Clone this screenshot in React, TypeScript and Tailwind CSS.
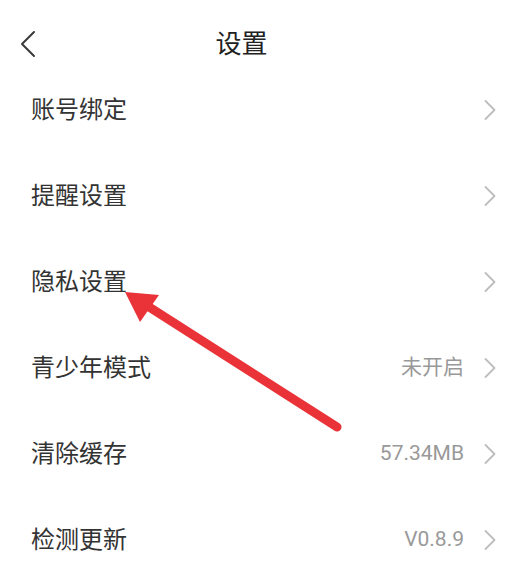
interface SettingRow {
  label: string;
  value?: string;
}

const rows: SettingRow[] = [
  { label: "账号绑定" },
  { label: "提醒设置" },
  { label: "隐私设置" },
  { label: "青少年模式", value: "未开启" },
  { label: "清除缓存", value: "57.34MB" },
  { label: "检测更新", value: "V0.8.9" },
];

const Chevron = () => (
  <svg width="14" height="22" viewBox="0 0 14 22" fill="none">
    <path d="M2.5 2 L11.5 11 L2.5 20" stroke="#bdbdbd" strokeWidth="1.8" strokeLinecap="round" strokeLinejoin="round" />
  </svg>
);

const App = () => {
  return (
    <div
      className="relative w-[515px] h-[586px] bg-white overflow-hidden"
      style={{ fontFamily: "Roboto, 'Noto Sans CJK SC', sans-serif" }}
    >
      {/* Header */}
      <div className="h-[67px] pt-[20px]">
        <div className="flex items-center h-[48px] pr-[32px]">
          <div className="w-[60px] flex items-center pl-[18px]">
            <svg width="20" height="28" viewBox="0 0 20 28" fill="none">
              <path d="M16 2 L4 14 L16 26" stroke="#3a3a3a" strokeWidth="2" strokeLinecap="round" strokeLinejoin="round" />
            </svg>
          </div>
          <div className="flex-1 text-center text-[26px] text-[#222] pr-[60px]">设置</div>
        </div>
      </div>

      {/* Rows */}
      <div className="flex flex-col">
        {rows.map((row) => (
          <div key={row.label} className="flex items-center h-[86px] pl-[31px] pr-[18px]">
            <span className="flex-1 text-[24px] text-[#333]">{row.label}</span>
            {row.value && <span className="text-[21px] text-[#999] mr-[19px]">{row.value}</span>}
            <Chevron />
          </div>
        ))}
      </div>

      {/* Annotation arrow */}
      <svg className="absolute left-0 top-0 pointer-events-none" width="515" height="586" viewBox="0 0 515 586">
        <line x1="337" y1="427" x2="146" y2="305" stroke="#ea3338" strokeWidth="9" strokeLinecap="round" />
        <polygon points="125,292 159,295 140,322" fill="#ea3338" />
      </svg>
    </div>
  );
};

export default App;
